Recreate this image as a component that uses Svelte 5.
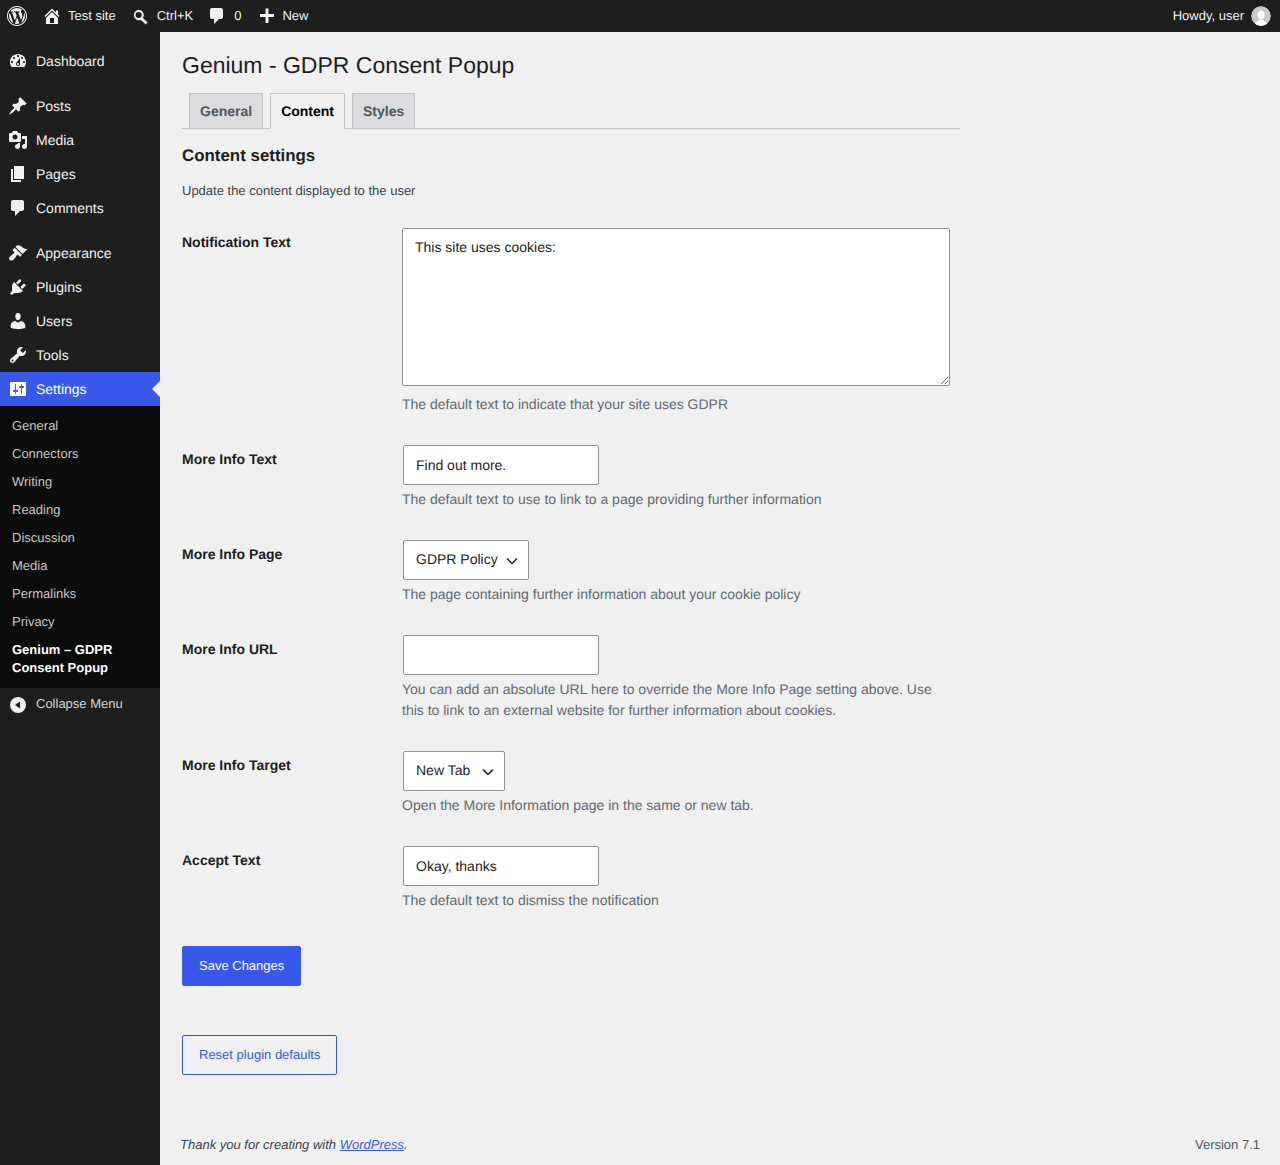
<script>
	const icons = {
		wp: 'M20 10c0-5.52-4.48-10-10-10S0 4.48 0 10s4.48 10 10 10 10-4.48 10-10zM10 1.01c4.96 0 8.99 4.03 8.99 8.99s-4.03 8.99-8.99 8.99S1.01 14.96 1.01 10 5.04 1.01 10 1.01zM8.01 14.82L4.96 6.61c.49-.03 1.05-.08 1.05-.08.43-.05.38-1.01-.06-.99 0 0-1.29.1-2.13.1-.15 0-.33 0-.52-.01 1.44-2.17 3.9-3.6 6.7-3.6 2.09 0 3.99.79 5.41 2.09-.6-.08-1.45.35-1.45 1.42 0 .66.38 1.22.79 1.88.31.54.5 1.22.5 2.21 0 1.34-1.27 4.48-1.27 4.48l-2.71-7.5c.48-.03.75-.16.75-.16.43-.05.38-1.1-.05-1.08 0 0-1.3.11-2.14.11-.78 0-2.11-.11-2.11-.11-.43-.02-.48 1.06-.05 1.08l.84.08 1.12 3.04zm6.02 2.15L16.64 10s.67-1.69.39-3.81c.63 1.14.94 2.42.94 3.81 0 2.96-1.56 5.58-3.94 6.97zM2.68 6.77L6.5 17.25c-2.67-1.3-4.47-4.08-4.47-7.25 0-1.16.2-2.23.65-3.23zm7.45 4.53l2.29 6.25c-.75.27-1.57.42-2.42.42-.72 0-1.41-.11-2.06-.3z',
		home: 'M16 8.5l1.53 1.53-1.06 1.06L10 4.62l-6.47 6.47-1.06-1.06L10 2.5l4 4v-2h2v4zm-6-2.46l6 5.99V18H4v-5.97zM12 17v-5H8v5h4z',
		search: 'M8 3a5.500 5.500 0 0 1 4.600 8.500l4.900 4.900-2.100 2.100-4.900-4.900A5.500 5.500 0 1 1 8 3zm0 2.300a3.200 3.200 0 1 0 0 6.400 3.200 3.200 0 0 0 0-6.400z',
		comment: 'M5 2h9c1.1 0 2 .9 2 2v7c0 1.1-.9 2-2 2h-2l-5 5v-5H5c-1.1 0-2-.9-2-2V4c0-1.1.9-2 2-2z',
		plus: 'M17 8v3h-5.5v6h-3v-6H3V8h5.5V2.500h3V8z',
		dashboard: 'M3.76 16h12.48c1.1-1.37 1.76-3.11 1.76-5 0-4.42-3.58-8-8-8s-8 3.58-8 8c0 1.89.66 3.63 1.76 5zM10 4c.55 0 1 .45 1 1s-.45 1-1 1-1-.45-1-1 .45-1 1-1zM6 6c.55 0 1 .45 1 1s-.45 1-1 1-1-.45-1-1 .45-1 1-1zm8 0c.55 0 1 .45 1 1s-.45 1-1 1-1-.45-1-1 .45-1 1-1zm-5.370 5.550L12 7v6c0 1.100-.9 2-2 2s-2-.9-2-2c0-.57.24-1.080.63-1.450zM4 10c.55 0 1 .45 1 1s-.45 1-1 1-1-.45-1-1 .45-1 1-1zm12 0c.55 0 1 .45 1 1s-.45 1-1 1-1-.45-1-1 .45-1 1-1zm-5 3c0-.55-.45-1-1-1s-1 .45-1 1 .45 1 1 1 1-.45 1-1z',
		posts: 'M10.44 3.02l1.82-1.82 6.36 6.35-1.83 1.82c-1.05-.68-2.48-.57-3.41.36l-.75.75c-.92.93-1.04 2.35-.35 3.41l-1.83 1.82-2.41-2.41-2.8 2.79c-.42.42-3.38 2.71-3.8 2.29s1.86-3.39 2.28-3.81l2.79-2.79L4.1 9.36l1.83-1.82c1.05.69 2.48.57 3.4-.36l.75-.75c.93-.92 1.05-2.35.36-3.41z',
		media: 'M13 11V4c0-.55-.45-1-1-1h-1.670L9 1H5L3.670 3H2c-.55 0-1 .45-1 1v7c0 .55.45 1 1 1h10c.55 0 1-.45 1-1zM7 4.500c1.380 0 2.500 1.120 2.500 2.500S8.380 9.500 7 9.500 4.500 8.380 4.500 7 5.620 4.500 7 4.500zM14 6h5v10.500c0 1.380-1.120 2.500-2.500 2.500S14 17.880 14 16.500s1.120-2.500 2.500-2.500c.17 0 .34.02.5.05V9h-3V6zm-4 8.050V13h2v3.500c0 1.380-1.120 2.500-2.500 2.500S7 17.880 7 16.500 8.120 14 9.500 14c.17 0 .34.02.5.05z',
		pages: 'M6 15V2h10v13H6zm-1 1h8v2H3V5h2v11z',
		appearance: 'M14.480 11.060L7.410 3.990l1.500-1.500c.5-.56 2.300-.47 3.510.32 1.210.8 1.430 1.280 2.910 2.100 1.180.64 2.450 1.260 4.450.85zm-.71.71L6.700 4.700 4.930 6.470c-.39.39-.39 1.020 0 1.410l1.060 1.060c.39.39.39 1.030 0 1.420-.6.6-1.430 1.110-2.210 1.690-.35.26-.7.53-1.010.84C1.430 13.710.96 14.650 1 15.540c.04.8.5 1.320.95 1.650.55.4 1.350.5 2.100.25.9-.3 1.650-1 2.350-1.800.75-.85 1.400-1.850 2.080-2.800.21-.3.5-.62.83-.82.39-.2.87-.14 1.190.18l1.060 1.060c.39.39 1.020.39 1.410 0z',
		plugins: 'M13.110 4.360L9.870 7.600 8 5.730l3.240-3.240c.35-.34 1.050-.2 1.560.32.52.51.66 1.210.31 1.550zm-8 1.770l.91-1.120 9.010 9.010-1.190.84c-.71.71-2.630 1.160-3.820 1.160H6.140L4.900 17.260c-.59.59-1.540.59-2.120 0-.59-.58-.59-1.530 0-2.120l1.240-1.240v-3.880c0-1.130.4-3.190 1.090-3.890zm7.260 3.970l3.240-3.240c.34-.35 1.040-.21 1.550.31.52.51.66 1.210.31 1.550l-3.240 3.250z',
		users: 'M10 9.250c-2.270 0-2.730-3.440-2.730-3.440C7 4.020 7.820 2 9.970 2c2.160 0 2.980 2.020 2.710 3.810 0 0-.41 3.440-2.680 3.440zm0 2.570L12.720 10c2.390 0 4.520 2.330 4.520 4.530v2.490s-3.650 1.130-7.240 1.130c-3.650 0-7.240-1.130-7.240-1.130v-2.490c0-2.250 1.940-4.480 4.470-4.480z',
		tools: 'M16.680 9.770c-1.340 1.340-3.300 1.670-4.950.99l-5.410 6.520c-.99.99-2.590.99-3.580 0s-.99-2.590 0-3.570l6.520-5.420c-.68-1.650-.35-3.610.99-4.950 1.280-1.280 3.120-1.620 4.720-1.060l-2.890 2.890 2.820 2.820 2.860-2.870c.53 1.580.18 3.390-1.080 4.650zM3.810 16.210c.4.39 1.040.39 1.430 0 .4-.4.4-1.040 0-1.430-.39-.4-1.030-.4-1.430 0-.39.39-.39 1.030 0 1.430z',
		settings: 'M18 16V4c0-.55-.45-1-1-1H3c-.55 0-1 .45-1 1v12c0 .55.45 1 1 1h14c.55 0 1-.45 1-1zM8 11h1c.55 0 1 .45 1 1s-.45 1-1 1H8v1.500c0 .28-.22.5-.5.5s-.5-.22-.5-.5V13H6c-.55 0-1-.45-1-1s.45-1 1-1h1V5.500c0-.28.22-.5.5-.5s.5.22.5.5V11zm5-2h-1c-.55 0-1-.45-1-1s.45-1 1-1h1V5.500c0-.28.22-.5.5-.5s.5.22.5.5V7h1c.55 0 1 .45 1 1s-.45 1-1 1h-1v5.500c0 .28-.22.5-.5.5s-.5-.22-.5-.5V9z',
		collapse: 'M10 2a8 8 0 1 1 0 16 8 8 0 0 1 0-16zm2 4.500L7 10l5 3.500z'
	};

	const menuGroups = [
		[{ label: 'Dashboard', icon: 'dashboard' }],
		[
			{ label: 'Posts', icon: 'posts' },
			{ label: 'Media', icon: 'media' },
			{ label: 'Pages', icon: 'pages' },
			{ label: 'Comments', icon: 'comment' }
		],
		[
			{ label: 'Appearance', icon: 'appearance' },
			{ label: 'Plugins', icon: 'plugins' },
			{ label: 'Users', icon: 'users' },
			{ label: 'Tools', icon: 'tools' }
		]
	];

	const submenu = ['General', 'Connectors', 'Writing', 'Reading', 'Discussion', 'Media', 'Permalinks', 'Privacy'];
</script>

<div class="admin">
	<header class="topbar">
		<svg class="logo" viewBox="0 0 20 20"><path d={icons.wp} /></svg>
		<span class="bar-item home"><svg viewBox="0 0 20 20"><path d={icons.home} /></svg>Test site</span>
		<span class="bar-item search"><svg viewBox="0 0 20 20"><path d={icons.search} /></svg>Ctrl+K</span>
		<span class="bar-item comments"><svg viewBox="0 0 20 20"><path d={icons.comment} /></svg>0</span>
		<span class="bar-item new"><svg viewBox="0 0 20 20"><path d={icons.plus} /></svg>New</span>
		<span class="howdy">Howdy, user
			<svg class="avatar" viewBox="0 0 20 20">
				<circle cx="10" cy="10" r="10" fill="#c9c9c9" />
				<ellipse cx="10" cy="9" rx="3.500" ry="4.500" fill="#fff" />
				<ellipse cx="10" cy="19" rx="6" ry="5" fill="#fff" />
			</svg>
		</span>
	</header>

	<div class="body">
		<nav class="sidebar">
			{#each menuGroups as group}
				<ul class="group">
					{#each group as item}
						<li class="menu-item"><svg viewBox="0 0 20 20"><path d={icons[item.icon]} /></svg>{item.label}</li>
					{/each}
				</ul>
			{/each}
			<div class="menu-item current"><svg viewBox="0 0 20 20"><path d={icons.settings} /></svg>Settings</div>
			<ul class="submenu">
				{#each submenu as sub}
					<li>{sub}</li>
				{/each}
				<li class="active">Genium – GDPR Consent Popup</li>
			</ul>
			<div class="collapse"><svg viewBox="0 0 20 20"><path d={icons.collapse} /></svg>Collapse Menu</div>
		</nav>

		<main class="content">
			<div class="wrap">
				<h1>Genium - GDPR Consent Popup</h1>
				<div class="tabs">
					<span class="tab">General</span>
					<span class="tab on">Content</span>
					<span class="tab">Styles</span>
				</div>
				<h2>Content settings</h2>
				<p class="intro">Update the content displayed to the user</p>

				<div class="row">
					<div class="label">Notification Text</div>
					<div class="field">
						<textarea class="area">This site uses cookies:</textarea>
						<p class="desc">The default text to indicate that your site uses GDPR</p>
					</div>
				</div>
				<div class="row">
					<div class="label">More Info Text</div>
					<div class="field">
						<input class="text" type="text" value="Find out more." />
						<p class="desc">The default text to use to link to a page providing further information</p>
					</div>
				</div>
				<div class="row">
					<div class="label">More Info Page</div>
					<div class="field">
						<span class="select-wrap">
							<select><option>GDPR Policy</option></select>
							<svg class="chev" viewBox="0 0 12 8"><path d="M1 1.500l5 5 5-5" /></svg>
						</span>
						<p class="desc">The page containing further information about your cookie policy</p>
					</div>
				</div>
				<div class="row">
					<div class="label">More Info URL</div>
					<div class="field">
						<input class="text" type="text" value="" />
						<p class="desc">You can add an absolute URL here to override the More Info Page setting above. Use this to link to an external website for further information about cookies.</p>
					</div>
				</div>
				<div class="row">
					<div class="label">More Info Target</div>
					<div class="field">
						<span class="select-wrap">
							<select class="target"><option>New Tab</option></select>
							<svg class="chev" viewBox="0 0 12 8"><path d="M1 1.500l5 5 5-5" /></svg>
						</span>
						<p class="desc">Open the More Information page in the same or new tab.</p>
					</div>
				</div>
				<div class="row">
					<div class="label">Accept Text</div>
					<div class="field">
						<input class="text" type="text" value="Okay, thanks" />
						<p class="desc">The default text to dismiss the notification</p>
					</div>
				</div>

				<button class="btn primary">Save Changes</button>
				<button class="btn secondary">Reset plugin defaults</button>
			</div>

			<footer class="footer">
				<span class="thanks">Thank you for creating with <a href="#top">WordPress</a>.</span>
				<span>Version 7.1</span>
			</footer>
		</main>
	</div>
</div>

<style>
	:global(body) {
		margin: 0;
		background: #f0f0f1;
	}

	.admin {
		font-family: "Liberation Sans", Arial, sans-serif;
		font-size: 13px;
		color: #1e1e1e;
		height: 1165px;
		display: flex;
		flex-direction: column;
		overflow: hidden;
		text-rendering: geometricPrecision;
	}

	svg path {
		fill: currentColor;
	}

	.topbar {
		height: 32px;
		flex: none;
		background: #1e1e1e;
		color: #f0f0f0;
		display: flex;
		align-items: center;
		line-height: 32px;
	}

	.logo {
		width: 20px;
		height: 20px;
		margin-left: 7px;
	}

	.bar-item {
		display: flex;
		align-items: center;
	}

	.bar-item svg {
		width: 20px;
		height: 20px;
	}

	.home {
		margin-left: 15px;
	}

	.home svg {
		margin-right: 6px;
	}

	.search {
		margin-left: 15px;
	}

	.search svg {
		width: 19px;
		height: 19px;
		margin-right: 7px;
		margin-top: 1px;
	}

	.comments {
		margin-left: 14px;
	}

	.comments svg {
		margin-right: 7px;
	}

	.new {
		margin-left: 16px;
	}

	.new svg {
		margin-right: 5px;
	}

	.howdy {
		margin-left: auto;
		margin-right: 9px;
		display: flex;
		align-items: center;
		gap: 7px;
	}

	.avatar {
		width: 20px;
		height: 20px;
		border-radius: 50%;
	}

	.body {
		flex: 1;
		display: flex;
		min-height: 0;
	}

	.sidebar {
		width: 160px;
		flex: none;
		background: #1e1e1e;
		color: #f0f0f0;
		font-size: 14px;
		padding-top: 12px;
		box-sizing: border-box;
	}

	.group {
		list-style: none;
		margin: 0 0 11px;
		padding: 0;
	}

	.group:nth-child(3) {
		margin-bottom: 0;
	}

	.menu-item {
		height: 34px;
		display: flex;
		align-items: center;
		padding-left: 8px;
		box-sizing: border-box;
	}

	.menu-item svg {
		width: 20px;
		height: 20px;
		margin-right: 8px;
		flex: none;
	}

	.current {
		background: #3858e9;
		color: #fff;
		position: relative;
	}

	.current::after {
		content: "";
		position: absolute;
		right: 0;
		top: 50%;
		margin-top: -8px;
		border: 8px solid transparent;
		border-left-width: 0;
		border-right-color: #f0f0f1;
	}

	.submenu {
		list-style: none;
		margin: 0;
		padding: 6px 0;
		background: #0c0c0c;
		font-size: 13px;
		color: #c5c5c5;
	}

	.submenu li {
		padding: 5px 12px;
		line-height: 18px;
	}

	.submenu .active {
		color: #fff;
		font-weight: 600;
	}

	.collapse {
		height: 30px;
		display: flex;
		align-items: center;
		padding-left: 8px;
		font-size: 13px;
		color: #d5d5d5;
	}

	.collapse svg {
		width: 20px;
		height: 20px;
		margin-right: 8px;
		color: #f0f0f0;
		margin-top: 3px;
	}

	.content {
		flex: 1;
		display: flex;
		flex-direction: column;
		min-width: 0;
	}

	.wrap {
		width: 778px;
		margin-left: 22px;
		flex: 1;
	}

	h1 {
		font-size: 23px;
		font-weight: 400;
		line-height: 29px;
		margin: 0;
		padding: 19px 0 0;
	}

	.tabs {
		display: flex;
		height: 35px;
		margin-top: 13px;
		padding-left: 7px;
		gap: 7px;
		border-bottom: 1px solid #c3c4c7;
	}

	.tab {
		height: 34px;
		padding: 0 10px;
		border: 1px solid #c3c4c7;
		border-bottom: 1px solid #c3c4c7;
		background: #dcdcde;
		color: #50575e;
		font-size: 14px;
		font-weight: 600;
		line-height: 34px;
	}

	.tab.on {
		background: #f0f0f1;
		border-bottom-color: #f0f0f1;
		color: #000;
	}

	h2 {
		font-size: 16.900px;
		font-weight: 600;
		line-height: 22px;
		margin: 16px 0 0;
		color: #1e1e1e;
	}

	.intro {
		margin: 14px 0 0;
		line-height: 19px;
		color: #3c434a;
	}

	.row {
		display: flex;
	}

	.intro + .row {
		padding-top: 13px;
	}

	.label {
		width: 220px;
		flex: none;
		padding-top: 21px;
		font-size: 14px;
		font-weight: 600;
		line-height: 18px;
		box-sizing: border-box;
	}

	.intro + .row .label {
		padding-top: 20px;
	}

	.field {
		width: 548px;
		padding: 15px 0 14px;
	}

	.area {
		display: block;
		width: 548px;
		height: 158px;
		box-sizing: border-box;
		padding: 8px 12px;
		margin: 0 0 8px;
		border: 1px solid #8c8f94;
		border-radius: 2px;
		background: #fff;
		color: #1e1e1e;
		font: 14px/20px "Liberation Sans", Arial, sans-serif;
		text-rendering: geometricPrecision;
		outline: none;
	}

	.text {
		display: block;
		width: 196px;
		height: 40px;
		box-sizing: border-box;
		margin: 1px 1px 0;
		padding: 0 12px;
		border: 1px solid #949494;
		border-radius: 2px;
		background: #fff;
		color: #1e1e1e;
		font: 14px "Liberation Sans", Arial, sans-serif;
		text-rendering: geometricPrecision;
		outline: none;
	}

	.select-wrap {
		position: relative;
		display: block;
		width: fit-content;
		margin: 1px 1px 0;
	}

	select {
		display: block;
		appearance: none;
		height: 40px;
		box-sizing: border-box;
		padding: 0 30px 2px 12px;
		border: 1px solid #949494;
		border-radius: 2px;
		background: #fff;
		color: #1e1e1e;
		font: 14px "Liberation Sans", Arial, sans-serif;
		text-rendering: geometricPrecision;
		outline: none;
	}

	select.target {
		min-width: 102px;
	}

	.chev {
		position: absolute;
		right: 11px;
		top: 17px;
		width: 12px;
		height: 8px;
		pointer-events: none;
	}

	.chev path {
		fill: none;
		stroke: #1e1e1e;
		stroke-width: 1.500;
	}

	.desc {
		margin: 4px 0 0;
		font-size: 14px;
		line-height: 21px;
		color: #646970;
	}

	.btn {
		display: block;
		height: 40px;
		box-sizing: border-box;
		padding: 0 16px 2px;
		border-radius: 2px;
		font: 13px "Liberation Sans", Arial, sans-serif;
		text-rendering: geometricPrecision;
		border: 1px solid #3858e9;
	}

	.primary {
		margin-top: 21px;
		background: #3858e9;
		color: #fff;
	}

	.secondary {
		margin-top: 49px;
		background: transparent;
		color: #3858e9;
	}

	.footer {
		display: flex;
		justify-content: space-between;
		padding: 0 20px 11px;
		line-height: 19px;
		color: #50575e;
	}

	.thanks {
		font-style: italic;
		color: #3c434a;
	}

	.thanks a {
		color: #3858e9;
	}
</style>
